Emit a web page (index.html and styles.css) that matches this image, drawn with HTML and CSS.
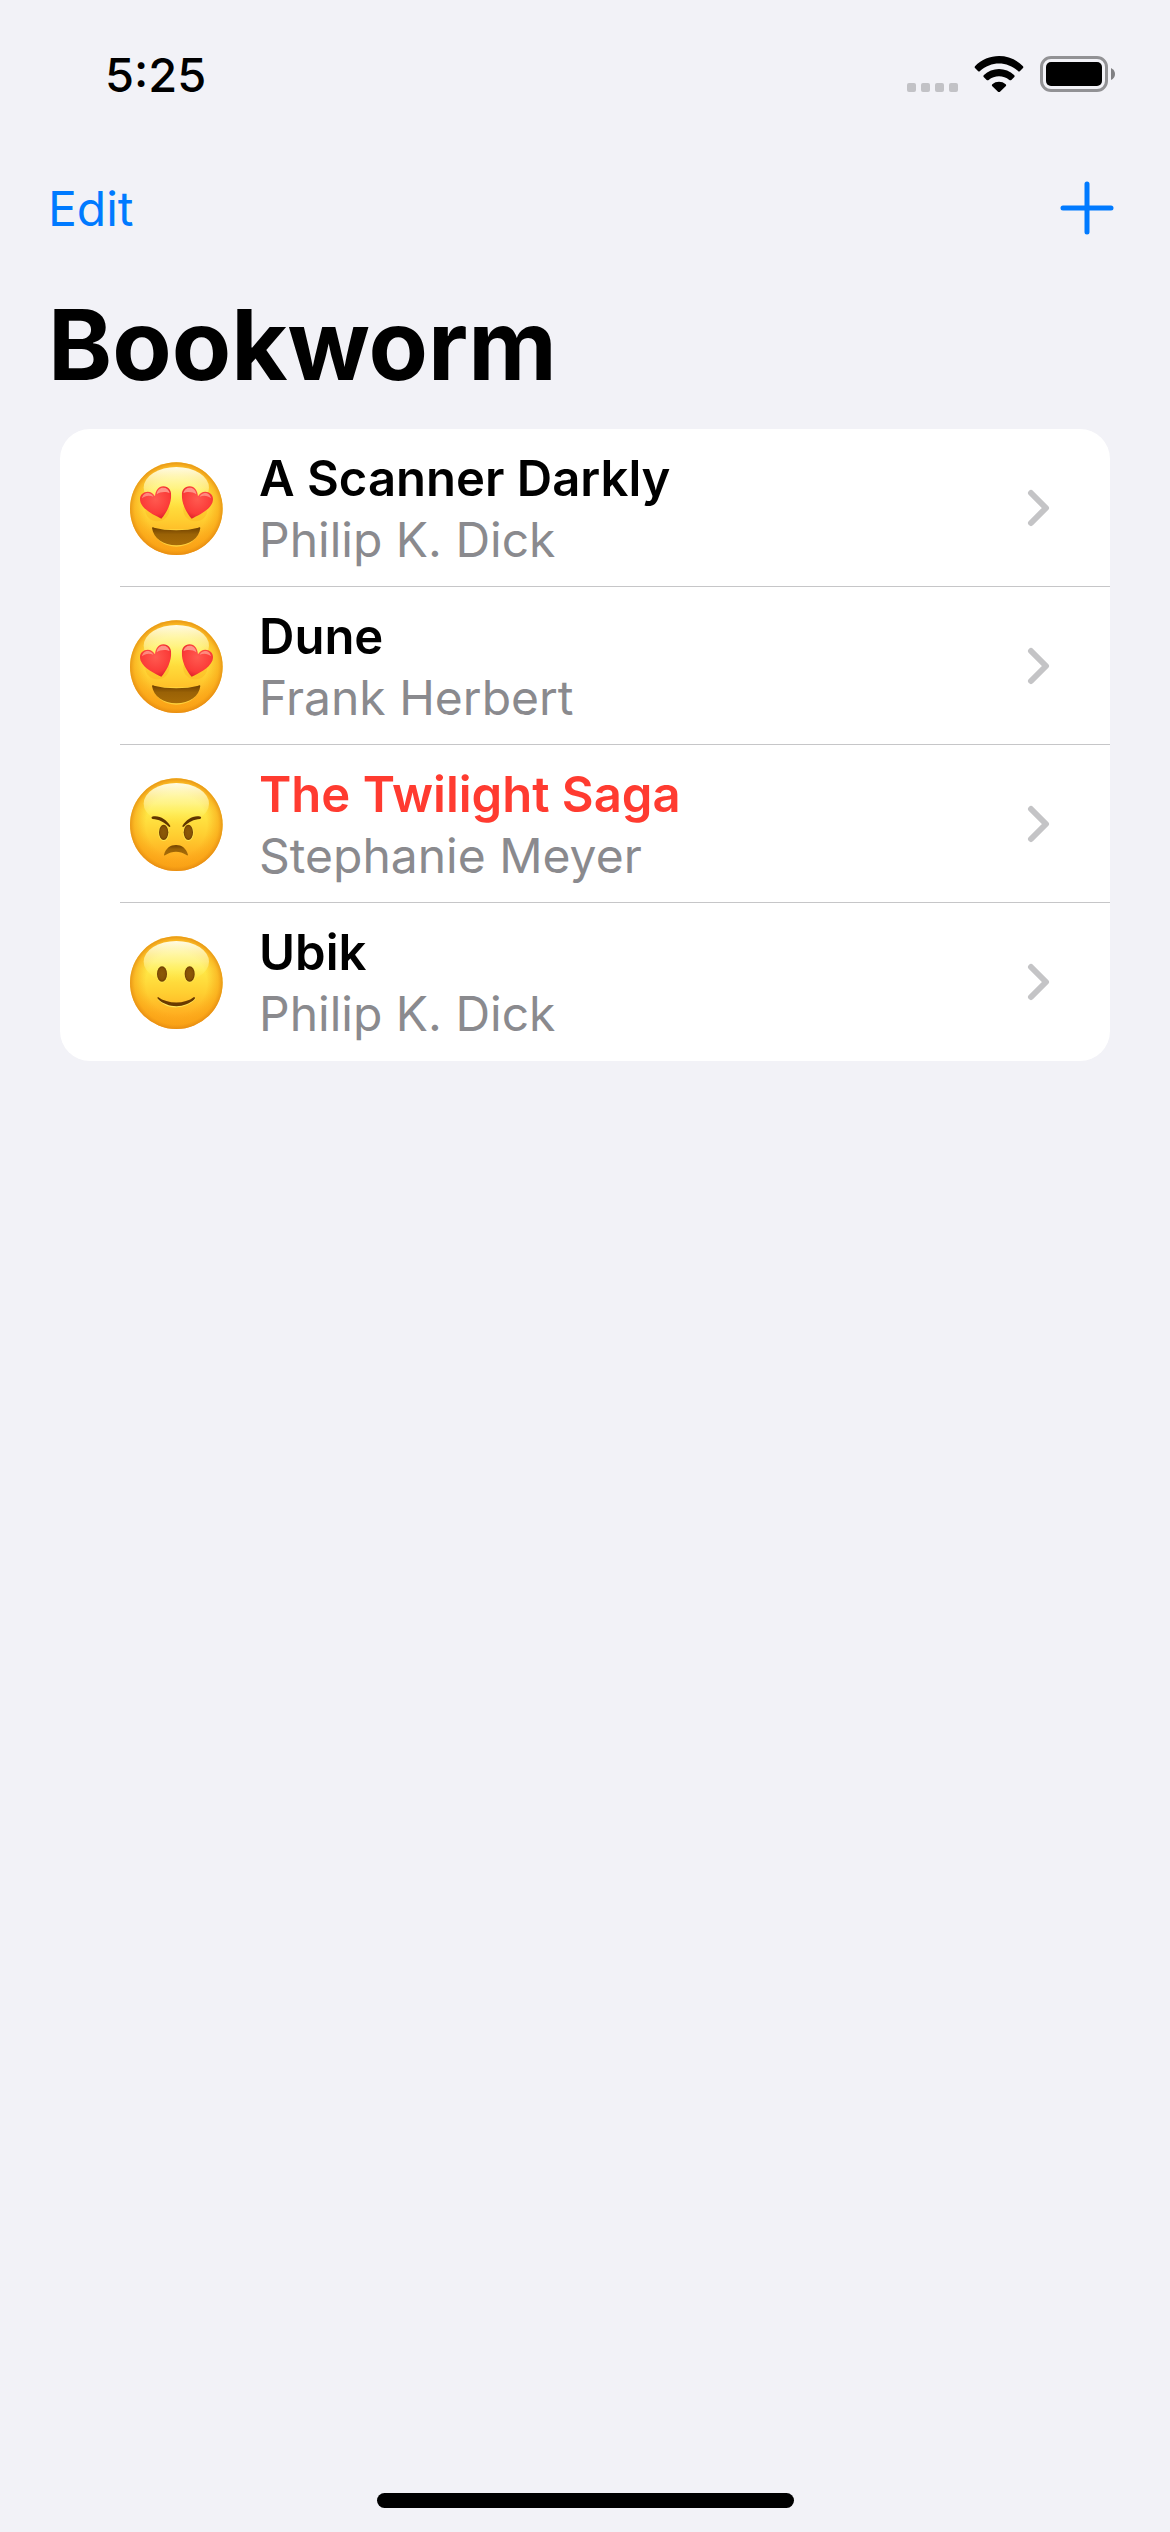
FILE: index.html
```html
<!DOCTYPE html>
<html lang="en">
<head>
<meta charset="utf-8">
<meta name="viewport" content="width=device-width, initial-scale=1">
<title>Bookworm</title>
<link rel="stylesheet" href="styles.css">
</head>
<body>
<svg class="defs" width="0" height="0" aria-hidden="true">
  <defs>
    <linearGradient id="skin" x1="0" y1="0" x2="0" y2="1">
      <stop offset="0" stop-color="#ffdc38"/>
      <stop offset=".35" stop-color="#ffea48"/>
      <stop offset=".6" stop-color="#ffd032"/>
      <stop offset=".85" stop-color="#ffae20"/>
      <stop offset="1" stop-color="#fb9e16"/>
    </linearGradient>
    <radialGradient id="rim">
      <stop offset=".66" stop-color="#f8a214" stop-opacity="0"/>
      <stop offset=".9" stop-color="#f8a214" stop-opacity=".6"/>
      <stop offset="1" stop-color="#e48a10" stop-opacity=".85"/>
    </radialGradient>
    <linearGradient id="shine" x1="0" y1="0" x2="0" y2="1">
      <stop offset="0" stop-color="#fffff0" stop-opacity=".95"/>
      <stop offset=".5" stop-color="#fffcb0" stop-opacity=".6"/>
      <stop offset="1" stop-color="#fff250" stop-opacity="0"/>
    </linearGradient>
    <radialGradient id="heart-red" cx=".5" cy=".4" r=".65">
      <stop offset="0" stop-color="#ff5a50"/>
      <stop offset=".7" stop-color="#fb3b38"/>
      <stop offset="1" stop-color="#d81c28"/>
    </radialGradient>
    <linearGradient id="mouth" x1="0" y1="0" x2="0" y2="1">
      <stop offset="0" stop-color="#6e4000"/>
      <stop offset=".4" stop-color="#9a6206"/>
      <stop offset="1" stop-color="#a86c08"/>
    </linearGradient>
    <radialGradient id="eye">
      <stop offset="0" stop-color="#8c5a08"/>
      <stop offset=".7" stop-color="#865206"/>
      <stop offset="1" stop-color="#6a3c00"/>
    </radialGradient>
    <symbol id="face" viewBox="0 0 345 345">
      <circle cx="169" cy="176" r="139" fill="url(#skin)"/>
      <circle cx="169" cy="176" r="139" fill="url(#rim)"/>
      <ellipse cx="169" cy="113" rx="98" ry="62" fill="url(#shine)"/>
    </symbol>
    <symbol id="heart" viewBox="0 0 94 100">
      <path d="M64 98C44 88 12 74 2 50C-5 30 8 17 23 17C33 17 40 22 45 31C46 15 55 1 70 1C87 1 96 15 93 36C91 58 78 83 64 98Z" fill="url(#heart-red)"/>
      <path d="M50 25C51 12 60 5 69 5C80 5 87 11 89 22C80 16 61 16 50 25Z" fill="#ffb0a0" opacity=".75"/>
      <path d="M6 37C8 24 18 20 25 21C32 22 37 26 40 32C29 27 15 28 6 37Z" fill="#ffb0a0" opacity=".65"/>
    </symbol>
    <symbol id="love" viewBox="0 0 345 345">
      <use href="#face" width="345" height="345"/>
      <ellipse cx="112" cy="180" rx="36" ry="34" fill="#f6a512" opacity=".25"/>
      <ellipse cx="226" cy="180" rx="36" ry="34" fill="#f6a512" opacity=".25"/>
      <use href="#heart" x="60" y="108" width="94" height="100"/>
      <use href="#heart" width="94" height="100" transform="translate(279 108) scale(-1 1)"/>
      <path d="M99 238C106 270 133 290 169 290C205 290 232 270 239 238Z" fill="#ffe24a" opacity=".7"/>
      <path d="M96 234C100 264 130 286 169 286C208 286 238 264 241 234C241 231 238 231 235 233C198 243 140 243 102 233C99 231 96 231 96 234Z" fill="url(#mouth)"/>
    </symbol>
    <symbol id="angry" viewBox="0 0 345 345">
      <use href="#face" width="345" height="345"/>
      <ellipse cx="131" cy="201" rx="16" ry="24" fill="#ffe450"/>
      <ellipse cx="205" cy="201" rx="16" ry="24" fill="#ffe450"/>
      <ellipse cx="131" cy="199" rx="14" ry="23" fill="url(#eye)"/>
      <ellipse cx="205" cy="199" rx="14" ry="23" fill="url(#eye)"/>
      <path d="M96 152C118 147 138 159 151 180C151 184 148 184 145 181C133 168 116 160 98 159C94 157 94 154 96 152Z" fill="#5f3500"/>
      <path d="M242 152C220 147 200 159 187 180C187 184 190 184 193 181C205 168 222 160 240 159C244 157 244 154 242 152Z" fill="#5f3500"/>
      <path d="M132 266C138 246 151 237 168 237C185 237 198 246 204 266C204 269 201 269 198 266C180 254 156 254 138 266C134 269 131 269 132 266Z" fill="url(#mouth)"/>
    </symbol>
    <symbol id="smile" viewBox="0 0 345 345">
      <use href="#face" width="345" height="345"/>
      <ellipse cx="126" cy="152" rx="17" ry="24" fill="#ffe450"/>
      <ellipse cx="209" cy="152" rx="17" ry="24" fill="#ffe450"/>
      <ellipse cx="126" cy="150" rx="15" ry="23" fill="url(#eye)"/>
      <ellipse cx="209" cy="150" rx="15" ry="23" fill="url(#eye)"/>
      <path d="M116 226C145 255 193 255 224 225" fill="none" stroke="#ffe65a" stroke-width="5" stroke-linecap="round"/>
      <path d="M114 219C143 241 195 241 222 219C225 219 226 222 224 225C197 253 143 254 114 225C112 222 112 219 114 219Z" fill="#6a3a00"/>
    </symbol>
    <symbol id="chevron" viewBox="0 0 24 40">
      <path d="M5 5L20 20L5 35" fill="none" stroke="#c4c4c6" stroke-width="6" stroke-linecap="round" stroke-linejoin="round"/>
    </symbol>
  </defs>
</svg>

<div class="screen">
  <header>
    <div class="status">
      <time class="clock">5:25</time>
      <div class="indicators">
        <svg width="51" height="36" viewBox="0 0 51 36" role="img" aria-label="No cellular signal" fill="#c2c2c6">
          <rect y="27" width="9" height="9" rx="2"/>
          <rect x="14" y="27" width="9" height="9" rx="2"/>
          <rect x="28" y="27" width="9" height="9" rx="2"/>
          <rect x="42" y="27" width="9" height="9" rx="2"/>
        </svg>
        <svg width="50" height="36" viewBox="0 0 150 108" role="img" aria-label="Wi-Fi">
          <path d="M3 31C42-10 108-10 147 31Q149 34 147 36L138 45Q135 48 132 45C99 15 51 15 18 45Q15 48 12 45L3 36Q1 34 3 31Z"/>
          <path d="M29 58C55 33 95 33 121 58Q123 61 121 63L112 72Q109 74 106 72C88 57 62 57 44 72Q41 74 38 72L29 63Q27 61 29 58Z"/>
          <path d="M55 85C66 75 84 75 95 85Q98 88 95 91L78 107Q75 110 72 107L55 91Q52 88 55 85Z"/>
        </svg>
        <svg width="76" height="36" viewBox="0 0 76 36" role="img" aria-label="Battery full">
          <rect x="1.500" y="1.500" width="65" height="33" rx="9.500" fill="none" stroke="#929295" stroke-width="3"/>
          <rect x="6" y="6" width="56" height="24" rx="5"/>
          <path d="M71 12Q75 14 75 18T71 24Z" fill="#808083"/>
        </svg>
      </div>
    </div>
    <nav class="toolbar">
      <button class="action" type="button">Edit</button>
      <button class="action" type="button" aria-label="Add book">
        <svg width="54" height="54" viewBox="0 0 54 54" aria-hidden="true">
          <path d="M27 3V51M3 27H51" stroke="#007aff" stroke-width="5" stroke-linecap="round"/>
        </svg>
      </button>
    </nav>
    <h1>Bookworm</h1>
  </header>

  <main>
    <ul class="books">
      <li>
        <a class="book" href="#scanner">
          <svg class="rating" role="img" aria-label="Loved it"><use href="#love"/></svg>
          <span class="details"><span class="title">A Scanner Darkly</span><span class="author">Philip K. Dick</span></span>
          <svg class="chevron" aria-hidden="true"><use href="#chevron"/></svg>
        </a>
      </li>
      <li>
        <a class="book" href="#dune">
          <svg class="rating" role="img" aria-label="Loved it"><use href="#love"/></svg>
          <span class="details"><span class="title">Dune</span><span class="author">Frank Herbert</span></span>
          <svg class="chevron" aria-hidden="true"><use href="#chevron"/></svg>
        </a>
      </li>
      <li>
        <a class="book" href="#twilight">
          <svg class="rating" role="img" aria-label="Hated it"><use href="#angry"/></svg>
          <span class="details"><span class="title title-bad">The Twilight Saga</span><span class="author">Stephanie Meyer</span></span>
          <svg class="chevron" aria-hidden="true"><use href="#chevron"/></svg>
        </a>
      </li>
      <li>
        <a class="book" href="#ubik">
          <svg class="rating" role="img" aria-label="Liked it"><use href="#smile"/></svg>
          <span class="details"><span class="title">Ubik</span><span class="author">Philip K. Dick</span></span>
          <svg class="chevron" aria-hidden="true"><use href="#chevron"/></svg>
        </a>
      </li>
    </ul>
  </main>

  <div class="home-indicator"></div>
</div>
</body>
</html>
```
FILE: styles.css
```css
* {
  box-sizing: border-box;
}

body {
  margin: 0;
  background: #f2f2f7;
  color: #000;
  font-family: Inter, "Liberation Sans", sans-serif;
  font-size: 48px;
  line-height: 61px;
}

svg {
  display: block;
  flex: none;
}

.defs {
  position: absolute;
}

.screen {
  display: flex;
  flex-direction: column;
  min-height: 100vh;
}

.status {
  display: flex;
  justify-content: space-between;
  height: 141px;
  padding: 44px 54px 0 105px;
}

.clock {
  font-size: 47px;
  font-weight: 500;
}

.indicators {
  display: flex;
  gap: 16px;
  padding-top: 12px;
}

.toolbar {
  display: flex;
  align-items: center;
  justify-content: space-between;
  height: 132px;
  padding: 2px 56px 0 48px;
}

.action {
  padding: 0;
  border: 0;
  background: none;
  color: #007aff;
  font: inherit;
  cursor: pointer;
}

h1 {
  margin: 0;
  padding: 12px 48px 24px;
  font-size: 97px;
  font-weight: 700;
  line-height: 120px;
}

.books {
  margin: 0 60px;
  padding: 0;
  border-radius: 30px;
  background: #fff;
  list-style: none;
  overflow: hidden;
}

.book {
  display: flex;
  align-items: center;
  gap: 24px;
  height: 158px;
  padding-right: 60px;
  padding-left: 60px;
  color: inherit;
  text-decoration: none;
}

.books li:not(:last-child) .book {
  background: linear-gradient(#c6c6c8, #c6c6c8) 60px 100% / 100% 1px no-repeat;
}

.rating {
  width: 115px;
  height: 115px;
  margin-bottom: 2px;
}

.details {
  display: flex;
  flex: 1;
  flex-direction: column;
  padding-top: 2px;
}

.title {
  font-size: 49px;
  font-weight: 600;
}

.title-bad {
  color: #ff3b30;
}

.author {
  color: #8a8a8e;
}

.chevron {
  width: 24px;
  height: 40px;
}

.home-indicator {
  width: 417px;
  height: 15px;
  margin: auto auto 24px;
  border-radius: 8px;
  background: #000;
}
```
